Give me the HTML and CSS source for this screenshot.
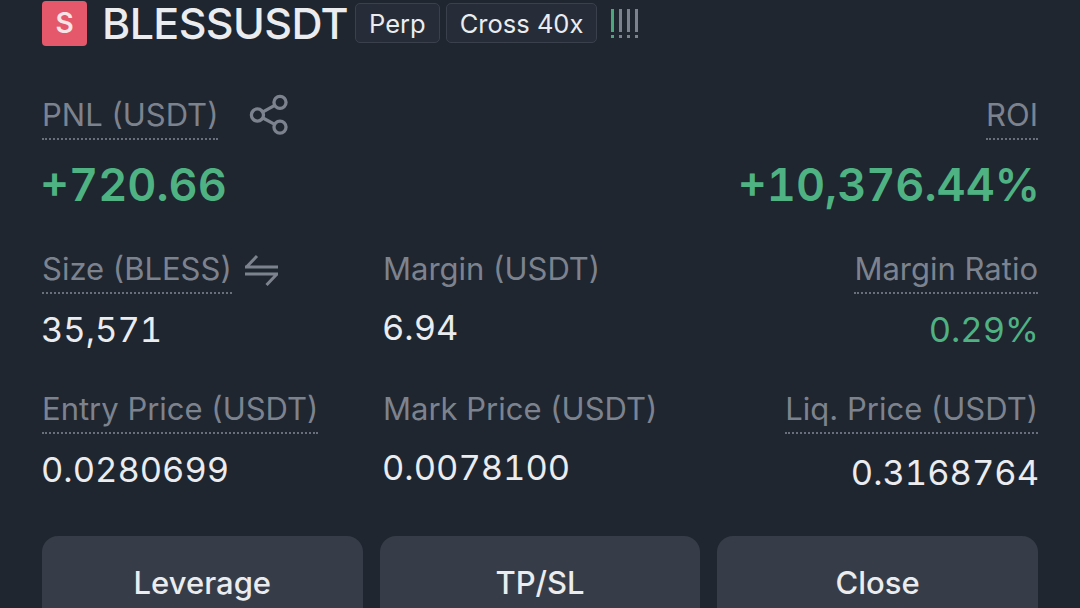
FILE: index.html
```html
<!DOCTYPE html>
<html lang="en">
<head>
  <meta charset="UTF-8">
  <title>BLESSUSDT Position</title>
  <link rel="stylesheet" href="styles.css">
</head>
<body>

  <header class="position-head">
    <span class="side-badge">S</span>
    <span class="symbol">BLESSUSDT</span>
    <span class="tag">Perp</span>
    <span class="tag">Cross 40x</span>
    <span class="risk">
      <i class="risk-bar on"></i>
      <i class="risk-bar"></i>
      <i class="risk-bar"></i>
      <i class="risk-bar"></i>
    </span>
  </header>

  <section class="pnl-row">
    <div class="pnl-col">
      <div class="label-line">
        <span class="label">PNL (USDT)</span>
        <svg class="share-icon" width="44" height="44" viewBox="0 0 40 40" fill="none" stroke="#7d838e" stroke-width="3">
          <circle cx="30" cy="8.5" r="5.5"/>
          <circle cx="9.5" cy="20" r="5.5"/>
          <circle cx="30" cy="31" r="5.5"/>
          <path d="M14.5 17.2 25.2 11.2M14.5 22.8 25.2 28.5"/>
        </svg>
      </div>
      <div class="pnl-value">+720.66</div>
    </div>
    <div class="pnl-col right">
      <div class="label-line">
        <span class="label">ROI</span>
      </div>
      <div class="pnl-value">+10,376.44%</div>
    </div>
  </section>

  <section class="stats-row first">
    <div class="stat">
      <div class="label-line">
        <span class="label">Size (BLESS)</span>
        <svg class="swap-icon" width="36" height="32" viewBox="0 0 36 32" fill="none" stroke="#7d838e" stroke-width="3">
          <path d="M1 13H34M13 2 2.500 13M1 20H34M33 20 22.500 31"/>
        </svg>
      </div>
      <div class="stat-value">35,571</div>
    </div>
    <div class="stat middle">
      <div class="label-line">
        <span class="label plain">Margin (USDT)</span>
      </div>
      <div class="stat-value raised">6.94</div>
    </div>
    <div class="stat right">
      <div class="label-line">
        <span class="label">Margin Ratio</span>
      </div>
      <div class="stat-value green">0.29%</div>
    </div>
  </section>

  <section class="stats-row">
    <div class="stat">
      <div class="label-line">
        <span class="label">Entry Price (USDT)</span>
      </div>
      <div class="stat-value">0.0280699</div>
    </div>
    <div class="stat middle">
      <div class="label-line">
        <span class="label plain">Mark Price (USDT)</span>
      </div>
      <div class="stat-value raised">0.0078100</div>
    </div>
    <div class="stat right">
      <div class="label-line">
        <span class="label">Liq. Price (USDT)</span>
      </div>
      <div class="stat-value lowered">0.3168764</div>
    </div>
  </section>

  <div class="button-group">
    <button>Leverage</button>
    <button>TP/SL</button>
    <button>Close</button>
  </div>

</body>
</html>
```

FILE: styles.css
```css
html, body {
  margin: 0;
  height: 608px;
  overflow: hidden;
  background-color: #1f2630;
  font-family: Inter, 'Noto Sans', sans-serif;
  color: #eaecef;
}

body {
  padding: 0 42px;
  box-sizing: border-box;
}

.position-head {
  display: flex;
  align-items: center;
  height: 46px;
}

.side-badge {
  width: 45px;
  height: 45px;
  border-radius: 4px;
  background-color: #e5576a;
  color: #f6e4e6;
  font-size: 28px;
  font-weight: 600;
  display: flex;
  align-items: center;
  justify-content: center;
  margin-right: 15px;
}

.symbol {
  font-size: 43px;
  font-weight: 500;
  line-height: 44px;
  letter-spacing: -0.6px;
  margin-right: 7px;
}

.tag {
  height: 40px;
  box-sizing: border-box;
  padding: 0 13px;
  margin-right: 6px;
  border: 1px solid #3a414c;
  border-radius: 5px;
  background-color: #262d38;
  font-size: 25.5px;
  display: flex;
  align-items: center;
}

.risk {
  display: flex;
  gap: 5px;
  margin-left: 8px;
  height: 29px;
}

.risk-bar {
  width: 3px;
  height: 29px;
  background:
    linear-gradient(#7d838e, #7d838e) top / 3px 23px no-repeat,
    linear-gradient(#7d838e, #7d838e) bottom / 3px 3px no-repeat;
}

.risk-bar.on {
  background:
    linear-gradient(#4ea67c, #4ea67c) top / 3px 23px no-repeat,
    linear-gradient(#4ea67c, #4ea67c) bottom / 3px 3px no-repeat;
}

.pnl-row {
  display: flex;
  justify-content: space-between;
  margin-top: 46px;
}

.label-line {
  display: flex;
  align-items: center;
  height: 48px;
}

.label {
  font-size: 31px;
  color: #7d838e;
  line-height: 46px;
  border-bottom: 2px dotted #6a707b;
}

.label.plain {
  border-bottom-color: transparent;
}

.right {
  text-align: right;
}

.right .label-line {
  justify-content: flex-end;
}

.share-icon {
  margin-left: 29px;
  margin-top: -2px;
}

.swap-icon {
  margin-left: 12px;
}

.pnl-value {
  font-size: 45px;
  font-weight: 600;
  font-variant-numeric: tabular-nums;
  color: #4fb283;
  line-height: 54px;
  margin: 18px -2px 0;
}

.stats-row {
  display: flex;
}

.stats-row.first {
  margin-top: 34px;
}

.stats-row:not(.first) {
  margin-top: 34px;
}

.stat {
  width: 341px;
}

.stat.middle {
  width: 300px;
}

.stat.right {
  flex: 1;
}

.stat-value {
  font-size: 34.5px;
  font-variant-numeric: tabular-nums;
  line-height: 44px;
  margin: 14px -1px 0;
}

.stat-value.raised {
  margin-top: 12px;
}

.stat-value.lowered {
  margin-top: 17px;
}

.stat-value.green {
  color: #4fb283;
}

.button-group {
  display: flex;
  gap: 17px;
  margin-top: 41px;
}

.button-group button {
  flex: 1;
  height: 92px;
  border: none;
  border-radius: 16px;
  background-color: #373d48;
  color: #eaecef;
  font-family: inherit;
  font-size: 31px;
  font-weight: 500;
}
```
